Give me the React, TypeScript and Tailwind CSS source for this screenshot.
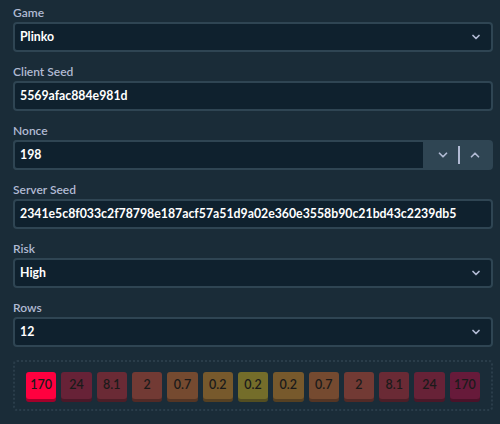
import React from 'react';
import { ChevronDown, ChevronUp } from 'lucide-react';

const payouts = [
  { v: '170', bg: 'bg-[#ff003f]', sh: 'shadow-[0_3px_0_#a3002a]' },
  { v: '24', bg: 'bg-[#672237]', sh: 'shadow-[0_3px_0_#4a1828]' },
  { v: '8.1', bg: 'bg-[#6a2a35]', sh: 'shadow-[0_3px_0_#4c1e27]' },
  { v: '2', bg: 'bg-[#723a34]', sh: 'shadow-[0_3px_0_#522a26]' },
  { v: '0.7', bg: 'bg-[#754a30]', sh: 'shadow-[0_3px_0_#543524]' },
  { v: '0.2', bg: 'bg-[#77592c]', sh: 'shadow-[0_3px_0_#554022]' },
  { v: '0.2', bg: 'bg-[#746d2a]', sh: 'shadow-[0_3px_0_#534e21]' },
  { v: '0.2', bg: 'bg-[#77592c]', sh: 'shadow-[0_3px_0_#554022]' },
  { v: '0.7', bg: 'bg-[#754a30]', sh: 'shadow-[0_3px_0_#543524]' },
  { v: '2', bg: 'bg-[#723a34]', sh: 'shadow-[0_3px_0_#522a26]' },
  { v: '8.1', bg: 'bg-[#6a2a35]', sh: 'shadow-[0_3px_0_#4c1e27]' },
  { v: '24', bg: 'bg-[#672237]', sh: 'shadow-[0_3px_0_#4a1828]' },
  { v: '170', bg: 'bg-[#671a3a]', sh: 'shadow-[0_3px_0_#4a1229]' },
];

function Label({ children }: { children: React.ReactNode }) {
  return <div className="h-[19px] text-[12px] leading-[19px] font-semibold text-[#b1bad3]">{children}</div>;
}

function Field({ label, value, select }: { label: string; value: string; select?: boolean }) {
  return (
    <div className="flex flex-col">
      <Label>{label}</Label>
      <div className="h-[30px] flex items-center justify-between rounded-[4px] border-2 border-[#2f4553] bg-[#0f212e] pl-[5px] pr-[9px]">
        <span className="text-[12.3px] font-bold text-white">{value}</span>
        {select && <ChevronDown className="h-[12px] w-[12px] text-[#b1bad3]" strokeWidth={3.5} />}
      </div>
    </div>
  );
}

export default function App() {
  return (
    <div className="w-[500px] h-[424px] bg-[#1a2c38] pl-[13px] pr-[7px] pt-[3px] font-['Lato',sans-serif] flex flex-col gap-[10px]">
      <Field label="Game" value="Plinko" select />
      <Field label="Client Seed" value="5569afac884e981d" />

      <div className="flex flex-col">
        <Label>Nonce</Label>
        <div className="h-[30px] flex rounded-[4px] bg-[#2f4553]">
          <div className="flex-1 flex items-center rounded-l-[4px] border-2 border-[#2f4553] bg-[#0f212e] pl-[5px]">
            <span className="text-[12.3px] font-bold text-white">198</span>
          </div>
          <div className="w-[68px] flex items-center justify-center gap-[8px] text-[#b1bad3]">
            <ChevronDown className="h-[14px] w-[14px]" strokeWidth={3} />
            <div className="h-[18px] w-[2px] bg-[#b1bad3]" />
            <ChevronUp className="h-[14px] w-[14px]" strokeWidth={3} />
          </div>
        </div>
      </div>

      <Field label="Server Seed" value="2341e5c8f033c2f78798e187acf57a51d9a02e360e3558b90c21bd43c2239db5" />
      <Field label="Risk" value="High" select />
      <Field label="Rows" value="12" select />

      <div className="mt-[3px] rounded-[4px] border-2 border-dotted border-[#2a3d4a] px-[11px] pt-[10px] pb-[7px] flex gap-[5px]">
        {payouts.map((p, i) => (
          <div
            key={i}
            className={`flex-1 h-[27px] mb-[3px] rounded-[3px] flex items-center justify-center text-[12.5px] font-semibold text-[#1a1a1a] ${p.bg} ${p.sh}`}
          >
            {p.v}
          </div>
        ))}
      </div>
    </div>
  );
}
